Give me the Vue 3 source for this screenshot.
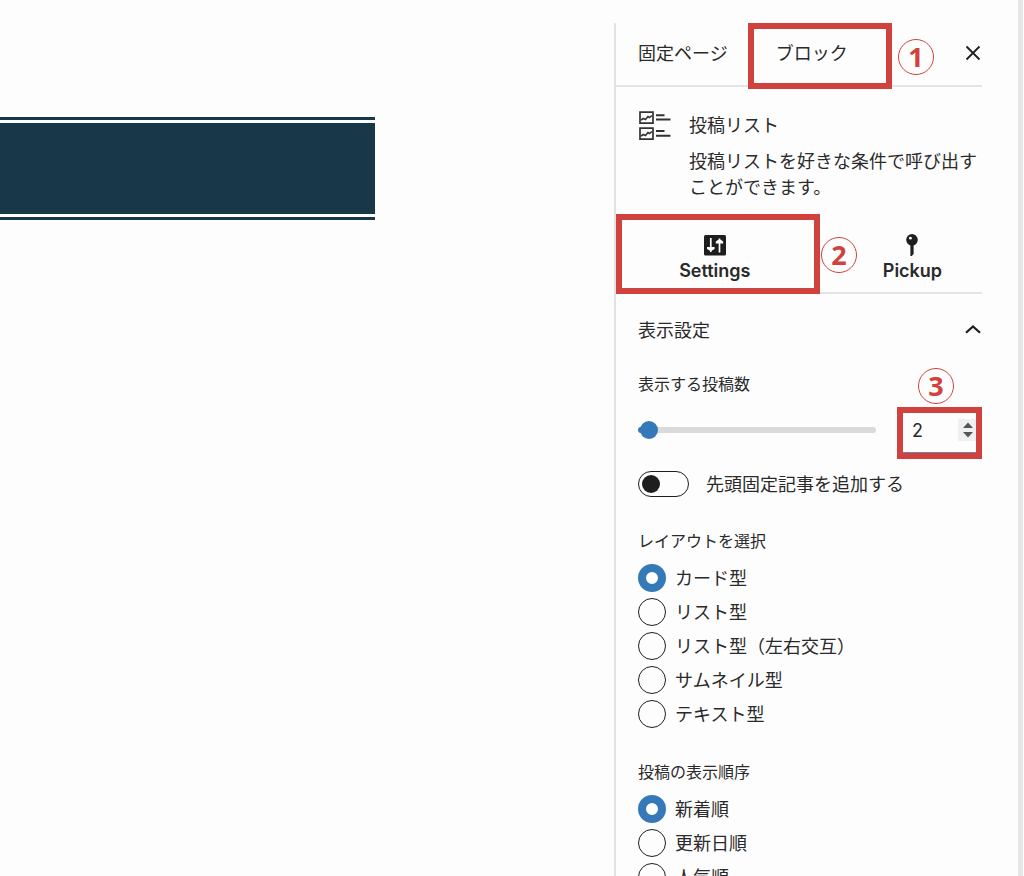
<template>
  <div class="editor">
    <main class="canvas">
      <div class="banner"></div>
    </main>

    <aside class="sidebar">
      <header class="sidebar-header">
        <button class="header-tab" type="button">固定ページ</button>
        <button class="header-tab" type="button">ブロック</button>
        <button class="close-btn" type="button" aria-label="閉じる">
          <svg width="18" height="18" viewBox="0 0 18 18">
            <path d="M2.5 2.5 15.5 15.5M15.5 2.5 2.5 15.5" fill="none" stroke="#1e1e1e" stroke-width="1.8" />
          </svg>
        </button>
        <span class="mark mark-block"></span>
        <span class="badge badge-block">1</span>
      </header>

      <section class="block-card">
        <svg class="block-icon" width="33" height="30" viewBox="0 0 33 30">
          <g fill="none" stroke="#333" stroke-width="1.7">
            <path d="M2 1.2H15V12.2H2ZM2 17.2H15V28.2H2Z" />
            <path d="M3 9 5.5 7.5 7.5 8.5 10 5.5 11.5 6.5 14 4.5M3 25 5.5 23.5 7.5 24.5 10 21.5 11.5 22.5 14 20.5" stroke-width="1.6" />
            <path d="M18 4.3H26.5M18 8.5H32.5M18 20H26.5M18 24.7H32.5" stroke-width="2" />
          </g>
        </svg>
        <div class="block-info">
          <h2 class="block-title">投稿リスト</h2>
          <p class="block-text">投稿リストを好きな条件で呼び出すことができます。</p>
        </div>
      </section>

      <nav class="tool-tabs">
        <button class="tool-tab" type="button">
          <svg width="22" height="22" viewBox="0 0 22 22">
            <rect x="0" y="1" width="22" height="20.5" rx="1.5" fill="#1e1e1e" />
            <path d="M6.8 4V18M15.5 4.5V18.5" fill="none" stroke="#fff" stroke-width="1.7" />
            <path d="M3 13H10.6V15L8 16.5H5.6L3 15ZM11.8 9.4H19.2V7.4L16.7 5.8H14.3L11.8 7.4Z" fill="#fff" />
          </svg>
          <span>Settings</span>
        </button>
        <button class="tool-tab" type="button">
          <svg width="22" height="22" viewBox="0 0 22 22">
            <circle cx="11" cy="5.8" r="5.8" fill="#1e1e1e" />
            <path d="M9.4 10H12.6V20L10.6 22H9.4Z" fill="#1e1e1e" />
            <circle cx="9.4" cy="4.2" r="1.4" fill="#fff" />
          </svg>
          <span>Pickup</span>
        </button>
        <span class="mark mark-settings"></span>
        <span class="badge badge-settings">2</span>
      </nav>

      <section class="panel">
        <button class="panel-toggle" type="button">
          <span>表示設定</span>
          <svg width="18" height="12" viewBox="0 0 18 12">
            <path d="M2 8.7 9 2.4 16 8.7" fill="none" stroke="#1e1e1e" stroke-width="2.2" />
          </svg>
        </button>

        <label class="label" for="post-count">表示する投稿数</label>
        <div class="count-row">
          <input
            v-model.number="count"
            class="slider"
            type="range"
            min="1"
            max="100"
            aria-label="表示する投稿数"
            :style="{ '--fill': count + '%' }"
          />
          <div class="count-box">
            <input id="post-count" v-model.number="count" class="count-input" type="number" min="1" max="100" />
            <div class="spinner">
              <button type="button" aria-label="増やす" @click="changeCount(1)">
                <svg width="10" height="6" viewBox="0 0 10 6"><path d="M0 6 5 0.5 10 6Z" fill="#555" /></svg>
              </button>
              <button type="button" aria-label="減らす" @click="changeCount(-1)">
                <svg width="10" height="6" viewBox="0 0 10 6"><path d="M0 0 5 5.5 10 0Z" fill="#555" /></svg>
              </button>
            </div>
            <span class="mark mark-count"></span>
            <span class="badge badge-count">3</span>
          </div>
        </div>

        <label class="switch-row">
          <input v-model="sticky" class="switch" type="checkbox" />
          <span>先頭固定記事を追加する</span>
        </label>

        <fieldset v-for="group in groups" :key="group.name" class="radio-group">
          <legend class="label">{{ group.label }}</legend>
          <label v-for="option in group.options" :key="option" class="radio-row">
            <input v-model="selected[group.name]" class="radio" type="radio" :name="group.name" :value="option" />
            <span>{{ option }}</span>
          </label>
        </fieldset>
      </section>
    </aside>

    <div class="scroll-edge"></div>
  </div>
</template>

<script setup>
import { reactive, ref } from 'vue';

const count = ref(2);
const sticky = ref(false);

const groups = [
  {
    name: 'layout',
    label: 'レイアウトを選択',
    options: ['カード型', 'リスト型', 'リスト型（左右交互）', 'サムネイル型', 'テキスト型'],
  },
  {
    name: 'order',
    label: '投稿の表示順序',
    options: ['新着順', '更新日順', '人気順'],
  },
];

const selected = reactive({ layout: 'カード型', order: '新着順' });

function changeCount(step) {
  count.value = Math.min(100, Math.max(1, count.value + step));
}
</script>

<style>
body {
  background: #fdfdfd;
}
</style>

<style scoped>
.editor {
  display: flex;
  height: 100vh;
  overflow: hidden;
  color: #2a2a2a;
  font-family: Inter, "Noto Sans CJK JP", sans-serif;
  font-size: 18px;
  line-height: 26px;
}
.editor *,
.editor *::before {
  box-sizing: border-box;
}
button,
input {
  margin: 0;
  padding: 0;
  border: 0;
  background: none;
  color: inherit;
  font: inherit;
}
button {
  cursor: pointer;
}
svg {
  display: block;
  flex: none;
}

/* 左側のキャンバス */
.canvas {
  flex: 1;
  padding-top: 117px;
}
.banner {
  width: 61%;
  height: 103px;
  padding: 3px 0;
  border: solid #18384a;
  border-width: 3px 0;
  background: #18384a content-box;
}

/* サイドバー */
.sidebar {
  width: 368px;
  margin: 23px 36px 0 0;
  border-left: 2px solid #e2e2e2;
}
.sidebar-header {
  position: relative;
  display: flex;
  gap: 4px;
  height: 64px;
  border-bottom: 2px solid #e4e4e4;
}
.header-tab {
  padding: 0 22px;
}
.close-btn {
  margin-left: auto;
  padding-bottom: 2px;
}

.block-card {
  display: flex;
  gap: 18px;
  padding: 24px 0 14px 22px;
}
.block-info {
  padding-top: 2px;
}
.block-title {
  margin: 0 0 10px;
  font-size: 18px;
  font-weight: 400;
}
.block-text {
  margin: 0;
}

.tool-tabs {
  position: relative;
  display: flex;
  height: 79px;
  border-bottom: 2px solid #e4e4e4;
}
.tool-tab {
  display: flex;
  flex: none;
  flex-direction: column;
  align-items: center;
  width: 54%;
  padding-top: 19px;
  font-weight: 600;
}
.tool-tab span {
  margin-top: 2px;
}

.panel {
  padding-left: 22px;
}
.panel-toggle {
  display: flex;
  align-items: center;
  justify-content: space-between;
  width: 100%;
  height: 72px;
}
.panel-toggle span,
.switch-row span,
.radio-row span {
  padding-top: 2px;
}
.label {
  display: block;
  padding: 0;
  font-size: 16px;
  line-height: 24px;
}
.panel > .label {
  margin-top: 6px;
}
.count-row {
  display: flex;
  align-items: center;
  gap: 24px;
  margin-top: 11px;
}
.slider {
  flex: 1;
  min-width: 0;
  height: 18px;
  appearance: none;
}
.slider::-webkit-slider-runnable-track {
  height: 6px;
  border-radius: 3px;
  background: linear-gradient(to right, #3579b8 var(--fill), #dadada var(--fill));
}
.slider::-webkit-slider-thumb {
  width: 18px;
  height: 18px;
  margin-top: -6px;
  border-radius: 50%;
  background: #3579b8;
  appearance: none;
}
.count-box {
  position: relative;
  display: flex;
  align-items: center;
  width: 82px;
  height: 46px;
  padding: 0 5px 0 11px;
  border: 1px solid #6f84ad;
}
.count-input {
  flex: 1;
  min-width: 0;
  padding-top: 2px;
  outline: none;
  appearance: textfield;
}
.count-input::-webkit-inner-spin-button {
  appearance: none;
}
.spinner {
  display: flex;
  flex-direction: column;
  justify-content: space-between;
  width: 18px;
  height: 22px;
  padding: 3px 2px 3px 5px;
  background: #f0f0f0;
}
.spinner button {
  height: 6px;
}

.switch-row {
  display: flex;
  align-items: center;
  gap: 17px;
  height: 26px;
  margin-top: 18px;
}
.switch {
  width: 51px;
  height: 26px;
  padding: 3px;
  border: 1px solid #1e1e1e;
  border-radius: 13px;
  appearance: none;
}
.switch::before {
  display: block;
  width: 18px;
  height: 18px;
  border-radius: 50%;
  background: #1e1e1e;
  content: "";
}
.switch:checked::before {
  margin-left: auto;
}

.radio-group {
  margin: 32px 0 0;
  padding: 0;
  border: 0;
}
.radio-group .label {
  margin-bottom: 11px;
}
.radio-row {
  display: flex;
  align-items: center;
  gap: 9px;
  height: 28px;
}
.radio-row + .radio-row {
  margin-top: 6px;
}
.radio {
  width: 28px;
  height: 28px;
  border: 1px solid #1e1e1e;
  border-radius: 50%;
  appearance: none;
}
.radio:checked {
  border: 8px solid #3579b8;
  background: #fff;
}

/* 注釈の赤枠と番号 */
.mark {
  position: absolute;
  border: 6px solid #cf423e;
  pointer-events: none;
}
.badge {
  position: absolute;
  width: 36px;
  height: 36px;
  border: 1px solid #cf423e;
  border-radius: 50%;
  color: #cf423e;
  font-family: "Open Sans", "Noto Sans CJK JP", sans-serif;
  font-size: 27px;
  font-weight: 700;
  line-height: 34px;
  text-align: center;
}
.mark-block {
  top: 0;
  left: 132px;
  width: 144px;
  height: 66px;
}
.badge-block {
  top: 16px;
  left: 282px;
}
.mark-settings {
  top: -1px;
  left: 0;
  width: 204px;
  height: 80px;
}
.badge-settings {
  top: 22px;
  left: 205px;
}
.mark-count {
  top: -1px;
  right: -1px;
  width: 85px;
  height: 52px;
}
.badge-count {
  top: -40px;
  left: 17px;
}

.scroll-edge {
  width: 6px;
  border-right: 1px solid #fff;
  background: #e6e6e6;
}
</style>
